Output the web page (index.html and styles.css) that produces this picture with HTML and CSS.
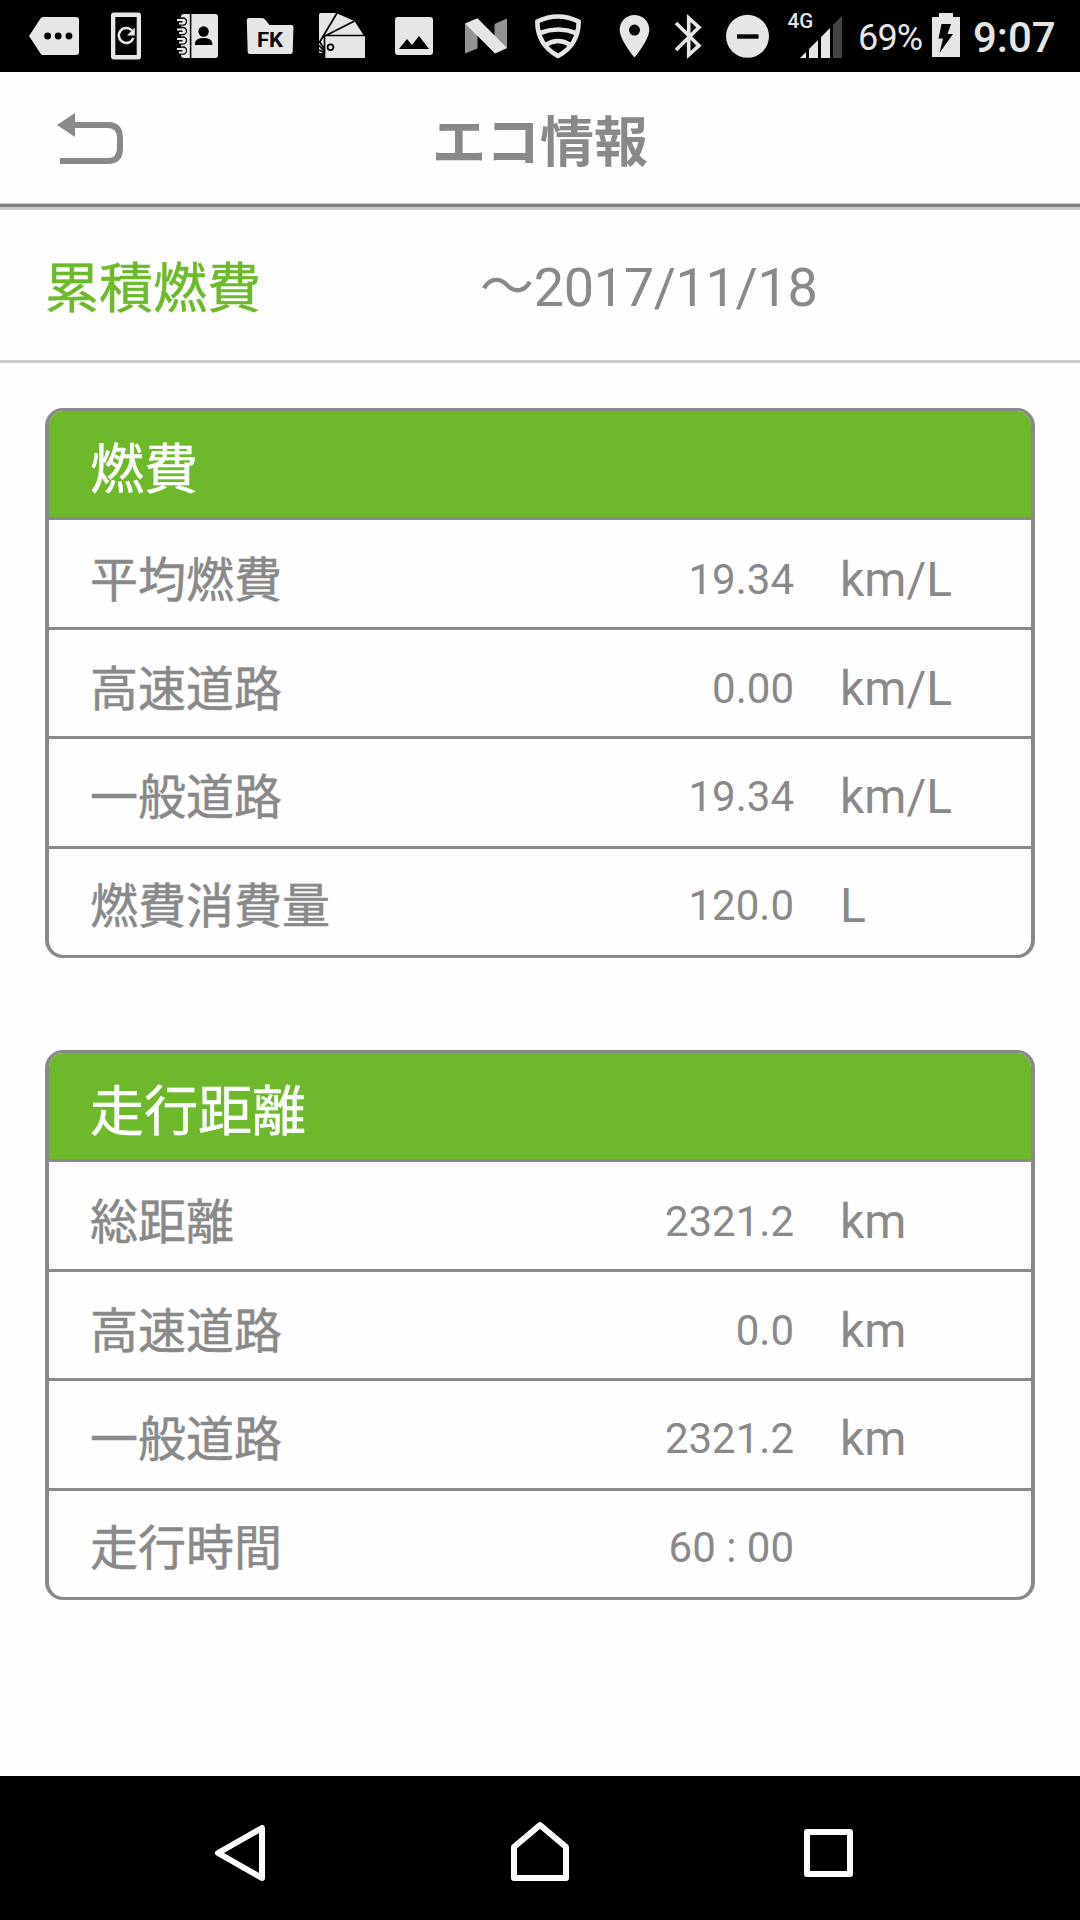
FILE: index.html
```
<!DOCTYPE html>
<html lang="ja">
<head>
    <meta charset="UTF-8">
    <meta name="viewport" content="width=device-width, initial-scale=1.0">
    <title>エコ情報</title>
    <link rel="stylesheet" href="styles.css">
</head>
<body>
    <div class="statusbar">
        <svg class="icon" width="95" height="72" viewBox="0 0 95 72">
            <path d="M29 36L40.5 18.5Q41.500 17 43 17H76Q79 17 79 20V52Q79 55 76 55H43Q41.500 55 40.500 53.500Z"/>
            <g fill="#000"><circle cx="47.600" cy="36" r="3.400"/><circle cx="58.200" cy="36" r="3.400"/><circle cx="69" cy="36" r="3.400"/></g>
        </svg>
        <svg class="icon" width="65" height="72" viewBox="95 0 65 72">
            <path fill-rule="evenodd" d="M114 12.500H138Q141 12.500 141 15.500V56.500Q141 59.500 138 59.500H114Q111 59.500 111 56.500V15.500Q111 12.500 114 12.500ZM115.300 17V55H136.700V17Z"/>
            <path d="M132 30.500A7.500 7.500 0 1 0 133.400 38" fill="none" stroke="#e6e6e6" stroke-width="2.500"/>
            <path d="M134.800 27.500V35.500H127Z"/>
        </svg>
        <svg class="icon" width="75" height="72" viewBox="160 0 75 72">
            <rect x="181" y="14" width="37" height="44" rx="3"/>
            <path d="M190.600 14V58" stroke="#000" stroke-width="1.600"/>
            <g fill="none" stroke="#000" stroke-width="5"><path d="M177 21.500H182.500M177 31H182.500M177 40.500H182.500M177 50.500H182.500"/></g>
            <g fill="none" stroke="#000" stroke-width="1.300"><path d="M180 18H183A3.500 3.500 0 0 1 183 25H180M180 27.500H183A3.500 3.500 0 0 1 183 34.500H180M180 37H183A3.500 3.500 0 0 1 183 44H180M180 47H183A3.500 3.500 0 0 1 183 54H180"/></g>
            <g fill="none" stroke="#e6e6e6" stroke-width="2"><path d="M177 20H182.500A1.600 1.600 0 0 1 182.500 23.400H179M177 29.500H182.500A1.600 1.600 0 0 1 182.500 33H179M177 39H182.500A1.600 1.600 0 0 1 182.500 42.500H179M177 49H182.500A1.600 1.600 0 0 1 182.500 52.500H179"/></g>
            <circle cx="203.600" cy="31.500" r="5.200" fill="#000"/>
            <path d="M195 45V43Q196 38 203.600 38Q211.500 38 212.300 43V45Z" fill="#000"/>
        </svg>
        <svg class="icon" width="71" height="72" viewBox="235 0 71 72">
            <path d="M249 18H262Q264 18 265.500 20L269.500 25H291.500Q293.500 25 293.500 27L292.700 52Q292.600 54 290.600 54H249.800Q247.800 54 247.700 52L246.800 20Q246.800 18 249 18Z"/>
            <text class="folder" x="257" y="46.500" textLength="26" lengthAdjust="spacingAndGlyphs">FK</text>
        </svg>
        <svg class="icon" width="74" height="72" viewBox="306 0 74 72">
            <path d="M319 14.500Q319 13 320.500 13H336L354.500 21L363.500 35H365V58H325V53H320.500Q319 53 319 51.500Z"/>
            <g fill="none" stroke="#000" stroke-width="1.700"><path d="M337 13L320 41.500M354.500 21L323 37M323.500 35.500H366M324.500 36V58M319 41L325 50M319 45.500L325 52M319 50L325 53"/><circle cx="330.500" cy="47.300" r="2.900"/></g>
        </svg>
        <svg class="icon" width="70" height="72" viewBox="380 0 70 72">
            <rect x="395" y="17" width="38" height="38" rx="3"/>
            <path d="M399 49L407 39L412 45L419 36L429 49Z" fill="#000"/>
        </svg>
        <svg class="icon" width="70" height="72" viewBox="450 0 70 72">
            <path d="M465 24L477.500 19V48.500L465 53.500ZM494.500 24L507 18.500V48L494.500 53.500Z" fill="#929292"/>
            <path d="M465 23.500L477.500 18.300L507 48L495 53.500Z"/>
        </svg>
        <svg class="icon" width="90" height="72" viewBox="520 0 90 72">
            <g fill="none" stroke="#e6e6e6" stroke-width="4.600" stroke-linejoin="round">
                <path d="M537.300 21.500Q558 11.500 578.700 21.500Q578.500 45 558 56Q537.500 45 537.300 21.500Z"/>
                <path d="M540 33Q558 26 576 33M545.500 45Q558 37 570.500 45"/>
            </g>
        </svg>
        <svg class="icon" width="52" height="72" viewBox="610 0 52 72">
            <path fill-rule="evenodd" d="M634.500 15C626.200 15 619.700 21.600 619.700 29.700C619.700 40 634.500 57.500 634.500 57.500C634.500 57.500 649.300 40 649.300 29.700C649.300 21.600 642.800 15 634.500 15ZM634.500 24.600A5.500 5.500 0 1 1 634.500 35.600A5.500 5.500 0 1 1 634.500 24.600Z"/>
        </svg>
        <svg class="icon" width="56" height="72" viewBox="662 0 56 72">
            <path d="M676 23L699 45.700L688.700 55V18L699 27.300L676 50" fill="none" stroke="#e6e6e6" stroke-width="3.600"/>
        </svg>
        <svg class="icon" width="64" height="72" viewBox="718 0 64 72">
            <circle cx="747.500" cy="36.300" r="21.500"/>
            <rect x="737" y="34.300" width="21.500" height="4.400" fill="#000"/>
        </svg>
        <svg class="icon" width="76" height="72" viewBox="782 0 76 72">
            <text class="network" x="787.500" y="28">4G</text>
            <path d="M800 58L806 52V58ZM809 49L818 40V58H809ZM821 37L830 28V58H821Z"/>
            <path d="M833 25L842 16V58H833Z" fill="#444"/>
        </svg>
        <span class="percent">69%</span>
        <svg class="icon" width="46" height="72" viewBox="927 0 46 72">
            <path d="M932 17H939V13H953V17H960V57H932Z"/>
            <path d="M941.500 24H951L947.500 34H953L939.500 53L943 38.500H938.500Z" fill="#000"/>
        </svg>
        <span class="clock">9:07</span>
    </div>

    <div class="header">
        <svg class="back" width="68" height="54" viewBox="56 111 68 54">
            <path d="M57 124L75 112V136Z" fill="#898989"/>
            <path d="M74 124H108Q120 124 120 137V147Q120 160 108 160H60" fill="none" stroke="#898989" stroke-width="6"/>
        </svg>
        <h1>エコ情報</h1>
    </div>

    <div class="period">
        <h2>累積燃費</h2>
        <span class="date">～2017/11/18</span>
    </div>

    <div class="content">
        <div class="card">
            <h3>燃費</h3>
            <div class="row">
                <span class="label">平均燃費</span>
                <span class="value">19.34</span>
                <span class="unit">km/L</span>
            </div>
            <div class="row">
                <span class="label">高速道路</span>
                <span class="value">0.00</span>
                <span class="unit">km/L</span>
            </div>
            <div class="row">
                <span class="label">一般道路</span>
                <span class="value">19.34</span>
                <span class="unit">km/L</span>
            </div>
            <div class="row">
                <span class="label">燃費消費量</span>
                <span class="value">120.0</span>
                <span class="unit">L</span>
            </div>
        </div>

        <div class="card">
            <h3>走行距離</h3>
            <div class="row">
                <span class="label">総距離</span>
                <span class="value">2321.2</span>
                <span class="unit">km</span>
            </div>
            <div class="row">
                <span class="label">高速道路</span>
                <span class="value">0.0</span>
                <span class="unit">km</span>
            </div>
            <div class="row">
                <span class="label">一般道路</span>
                <span class="value">2321.2</span>
                <span class="unit">km</span>
            </div>
            <div class="row">
                <span class="label">走行時間</span>
                <span class="value">60 : 00</span>
                <span class="unit"></span>
            </div>
        </div>
    </div>

    <div class="navbar">
        <svg width="60" height="70" viewBox="210 1818 60 70"><path d="M218 1853L262 1828V1878Z"/></svg>
        <svg class="home" width="60" height="70" viewBox="510 1818 60 70"><path d="M514 1847L540 1825L566 1847V1878H514Z"/></svg>
        <svg width="60" height="70" viewBox="799 1818 60 70"><path d="M807 1832H850V1874H807Z"/></svg>
    </div>
</body>
</html>
```
FILE: styles.css
```
* {
    box-sizing: border-box;
}

body {
    display: flex;
    flex-direction: column;
    height: 1920px;
    margin: 0;
    background: #fefefe;
    color: #898989;
    font-family: Roboto, "Noto Sans CJK JP", sans-serif;
}

h1, h2, h3 {
    margin: 0;
    font-size: 54px;
    font-weight: 400;
}

h2, h3, .label {
    -webkit-text-stroke: 0.5px;
}

/* Android status bar */

.statusbar {
    display: flex;
    height: 72px;
    background: #000;
    color: #e6e6e6;
}

.icon {
    flex: none;
    fill: #e6e6e6;
}

.folder {
    fill: #000;
    font-size: 21px;
    font-weight: 700;
}

.network {
    font-size: 20.5px;
    font-weight: 500;
}

.percent {
    width: 69px;
    font-size: 36px;
    letter-spacing: -0.8px;
    line-height: 77px;
}

.clock {
    font-size: 42px;
    font-weight: 500;
    line-height: 75px;
}

/* Title bar */

.header {
    display: grid;
    grid-template-columns: 68px 1fr 68px;
    align-items: center;
    height: 138px;
    padding: 0 56px;
    border-bottom: 3px solid #ccc;
    box-shadow: inset 0 -3px 0 #7f7f7f, inset 0 -4px 0 #ccc;
}

.back {
    margin-top: -1px;
}

h1 {
    padding-top: 8px;
    font-weight: 700;
    line-height: 80px;
    text-align: center;
}

.period {
    display: flex;
    align-items: center;
    height: 153px;
    padding: 6px 0 0 45px;
    border-bottom: 3px solid #ccc;
}

h2 {
    width: 435px;
    padding-top: 4px;
    color: #6db92b;
    line-height: 82px;
}

.date {
    font-size: 54px;
    letter-spacing: -0.35px;
    line-height: 80px;
}

/* Tables */

.content {
    flex: 1;
    padding: 45px 45px 0;
}

.card {
    height: 550px;
    margin-bottom: 92px;
    border: 3px solid #898989;
    border-width: 3px 4px;
    border-radius: 18px;
    overflow: hidden;
}

h3 {
    height: 106px;
    padding-left: 41px;
    background: #6db92b;
    color: #fff;
    line-height: 120px;
}

.row {
    display: grid;
    grid-template-columns: 400px 304px 1fr;
    align-items: start;
    height: 109.5px;
    padding: 5px 0 0 41px;
    border-top: 3px solid #898989;
    line-height: 109px;
}

.row:nth-child(3) {
    padding-top: 4px;
}

.row:nth-child(4) {
    padding-top: 3px;
}

.row:nth-child(5) {
    padding-top: 2px;
}

.label {
    padding-top: 1px;
    font-size: 48px;
}

.value {
    font-size: 42px;
    text-align: right;
}

.unit {
    padding-left: 46px;
    font-size: 48px;
}

/* Navigation buttons */

.navbar {
    display: flex;
    height: 144px;
    padding: 42px 0 0 210px;
    background: #000;
}

.navbar path {
    fill: none;
    stroke: #fff;
    stroke-width: 6;
    stroke-linejoin: round;
}

.home {
    margin: 0 229px 0 240px;
}
```
